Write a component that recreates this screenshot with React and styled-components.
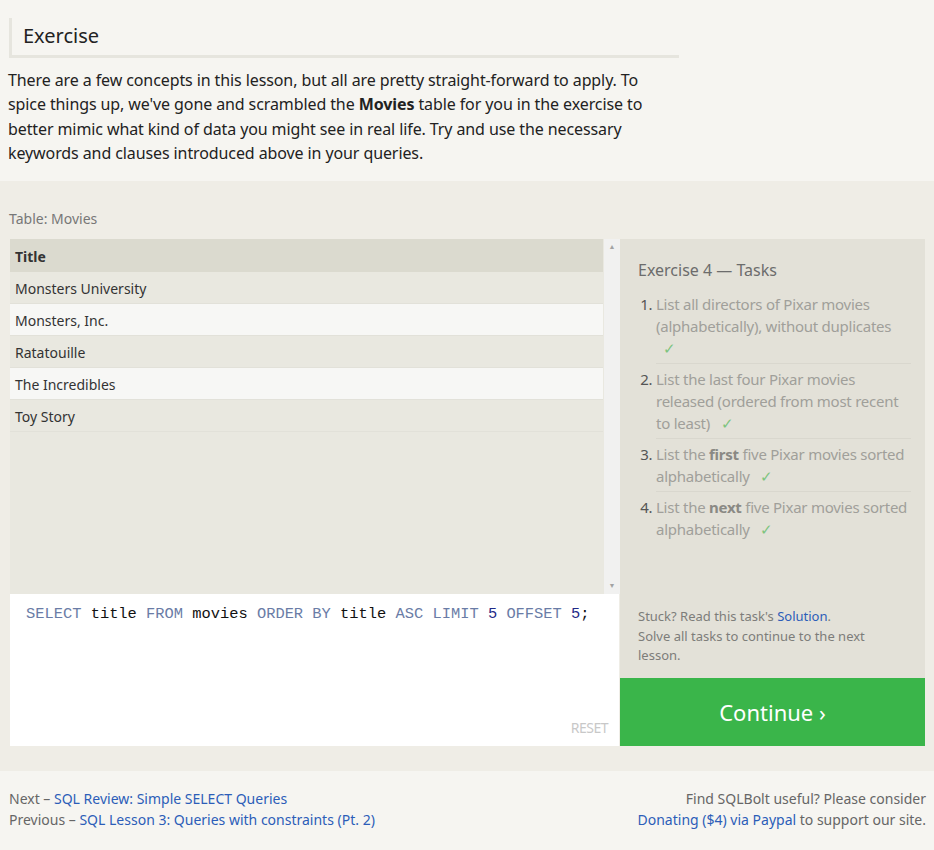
import styled, { createGlobalStyle } from "styled-components";

const GlobalStyle = createGlobalStyle`
    body {
        margin: 0;
        background: #f6f5f1;
        font-family: "Noto Sans", "Open Sans", sans-serif;
        color: #222;
    }
`;

const movies = ["Monsters University", "Monsters, Inc.", "Ratatouille", "The Incredibles", "Toy Story"];

function App() {
    return (
        <>
            <GlobalStyle />
            <Intro>
                <Heading>Exercise</Heading>
                <Paragraph>
                    There are a few concepts in this lesson, but all are pretty straight-forward to apply. To
                    spice things up, we've gone and scrambled the <Strong>Movies</Strong> table for you in the exercise to
                    better mimic what kind of data you might see in real life. Try and use the necessary
                    keywords and clauses introduced above in your queries.
                </Paragraph>
            </Intro>

            <ExerciseSection>
                <TableLabel>Table: Movies</TableLabel>
                <Workspace>
                    <LeftColumn>
                        <TableArea>
                            <TableScroll>
                                <HeaderRow>Title</HeaderRow>
                                {movies.map((m, i) => (
                                    <Row key={m} $light={i % 2 === 1}>{m}</Row>
                                ))}
                            </TableScroll>
                            <Scrollbar>
                                <Arrow>▲</Arrow>
                                <Arrow>▼</Arrow>
                            </Scrollbar>
                        </TableArea>
                        <Editor>
                            <Code>
                                <Kw>SELECT</Kw> title <Kw>FROM</Kw> movies <Kw>ORDER BY</Kw> title <Kw>ASC</Kw> <Kw>LIMIT</Kw> <Num>5</Num> <Kw>OFFSET</Kw> <Num>5</Num>;
                            </Code>
                            <Reset>RESET</Reset>
                        </Editor>
                    </LeftColumn>

                    <RightColumn>
                        <TasksPanel>
                            <TasksTitle>Exercise 4 — Tasks</TasksTitle>
                            <TaskList>
                                <Task>List all directors of Pixar movies (alphabetically), without duplicates <Check>✓</Check></Task>
                                <Task>List the last four Pixar movies released (ordered from most recent to least) <Check>✓</Check></Task>
                                <Task>List the <b>first</b> five Pixar movies sorted alphabetically <Check>✓</Check></Task>
                                <Task>List the <b>next</b> five Pixar movies sorted alphabetically <Check>✓</Check></Task>
                            </TaskList>
                            <Stuck>
                                Stuck? Read this task's <Link>Solution</Link>.<br />
                                Solve all tasks to continue to the next lesson.
                            </Stuck>
                        </TasksPanel>
                        <ContinueButton>Continue ›</ContinueButton>
                    </RightColumn>
                </Workspace>
            </ExerciseSection>

            <Footer>
                <div>
                    Next – <Link>SQL Review: Simple SELECT Queries</Link><br />
                    Previous – <Link>SQL Lesson 3: Queries with constraints (Pt. 2)</Link>
                </div>
                <FooterRight>
                    Find SQLBolt useful? Please consider<br />
                    <Link>Donating ($4) via Paypal</Link> to support our site.
                </FooterRight>
            </Footer>
        </>
    );
}

const Intro = styled.div`
    padding: 18px 8px 15px;
`;

const Heading = styled.h3`
    margin: 0 0 0 1px;
    width: 656px;
    padding: 6px 0 7px 11px;
    font-size: 20px;
    font-weight: normal;
    line-height: 24px;
    color: #222;
    border-left: 3px solid #e6e5de;
    border-bottom: 3px solid #e6e5de;
`;

const Paragraph = styled.p`
    margin: 10px 0 0;
    width: 670px;
    font-size: 16px;
    line-height: 24.4px;
    letter-spacing: -0.1px;
`;

const Strong = styled.strong`
    font-weight: bold;
`;

const ExerciseSection = styled.div`
    background: #efede6;
    padding: 28px 9px 25px 10px;
`;

const TableLabel = styled.div`
    font-size: 14px;
    color: #777;
    margin: 0 0 10px -1px;
    line-height: 20px;
`;

const Workspace = styled.div`
    display: grid;
    grid-template-columns: 610px 305px;
`;

const LeftColumn = styled.div`
    display: flex;
    flex-direction: column;
`;

const TableArea = styled.div`
    display: flex;
    height: 355px;
    background: #e9e8e0;
`;

const TableScroll = styled.div`
    flex: 1;
    font-size: 14px;
    color: #333;
`;

const HeaderRow = styled.div`
    height: 33px;
    line-height: 35px;
    padding-left: 5px;
    font-weight: bold;
    background: #dbdacf;
`;

const Row = styled.div`
    height: 31px;
    line-height: 33px;
    padding-left: 5px;
    border-bottom: 1px solid #e2e1d9;
    background: ${({ $light }) => ($light ? "#f7f7f5" : "#e9e8e0")};
`;

const Scrollbar = styled.div`
    width: 16px;
    margin-left: 1px;
    background: #f1f1f0;
    display: flex;
    flex-direction: column;
    justify-content: space-between;
    align-items: center;
    padding: 3px 0;
`;

const Arrow = styled.span`
    font-size: 7px;
    color: #a3a3a3;
    line-height: 10px;
`;

const Editor = styled.div`
    background: #fff;
    height: 152px;
    position: relative;
    border-right: 1px solid #efede6;
`;

const Code = styled.div`
    font-family: "Liberation Mono", monospace;
    font-size: 15.4px;
    color: #111;
    padding: 10px 16px;
    line-height: 20px;
`;

const Kw = styled.span`
    color: #6a7ca6;
`;

const Num = styled.span`
    color: #1f2a87;
`;

const Reset = styled.span`
    position: absolute;
    right: 11px;
    bottom: 9px;
    font-size: 14px;
    color: #c8c8c8;
    letter-spacing: -0.5px;
`;

const RightColumn = styled.div`
    display: flex;
    flex-direction: column;
`;

const TasksPanel = styled.div`
    flex: 1;
    background: #e3e1d8;
    padding: 20px 14px 12px 18px;
    display: flex;
    flex-direction: column;
`;

const TasksTitle = styled.div`
    font-size: 16px;
    color: #6c6c6c;
    line-height: 22px;
`;

const TaskList = styled.ol`
    margin: 12px 0 0;
    padding-left: 18px;
    font-size: 15px;
    line-height: 22px;
    letter-spacing: -0.25px;
    flex: 1;
`;

const Task = styled.li`
    color: #a09f9a;
    padding: 0 0 4px;
    margin-bottom: 4px;
    border-bottom: 1px solid #d9d7ce;

    &::marker {
        color: #555;
    }

    &:last-child {
        border-bottom: none;
    }

    b {
        color: #8a8984;
    }
`;

const Check = styled.span`
    color: #7dc47f;
    margin-left: 7px;
`;

const Stuck = styled.div`
    font-size: 13px;
    line-height: 19.5px;
    color: #7d7d7a;
    padding-right: 8px;
`;

const Link = styled.a`
    color: #2c5db8;
    cursor: pointer;
`;

const ContinueButton = styled.button`
    height: 68px;
    border: none;
    background: #3ab54a;
    color: #fff;
    font-family: "Noto Sans", "Open Sans", sans-serif;
    font-size: 22px;
    padding-top: 2px;
    cursor: pointer;
`;

const Footer = styled.div`
    display: flex;
    justify-content: space-between;
    padding: 17px 8px 30px 9px;
    font-size: 14px;
    line-height: 21px;
    color: #666;
`;

const FooterRight = styled.div`
    text-align: right;
`;

export default App;
